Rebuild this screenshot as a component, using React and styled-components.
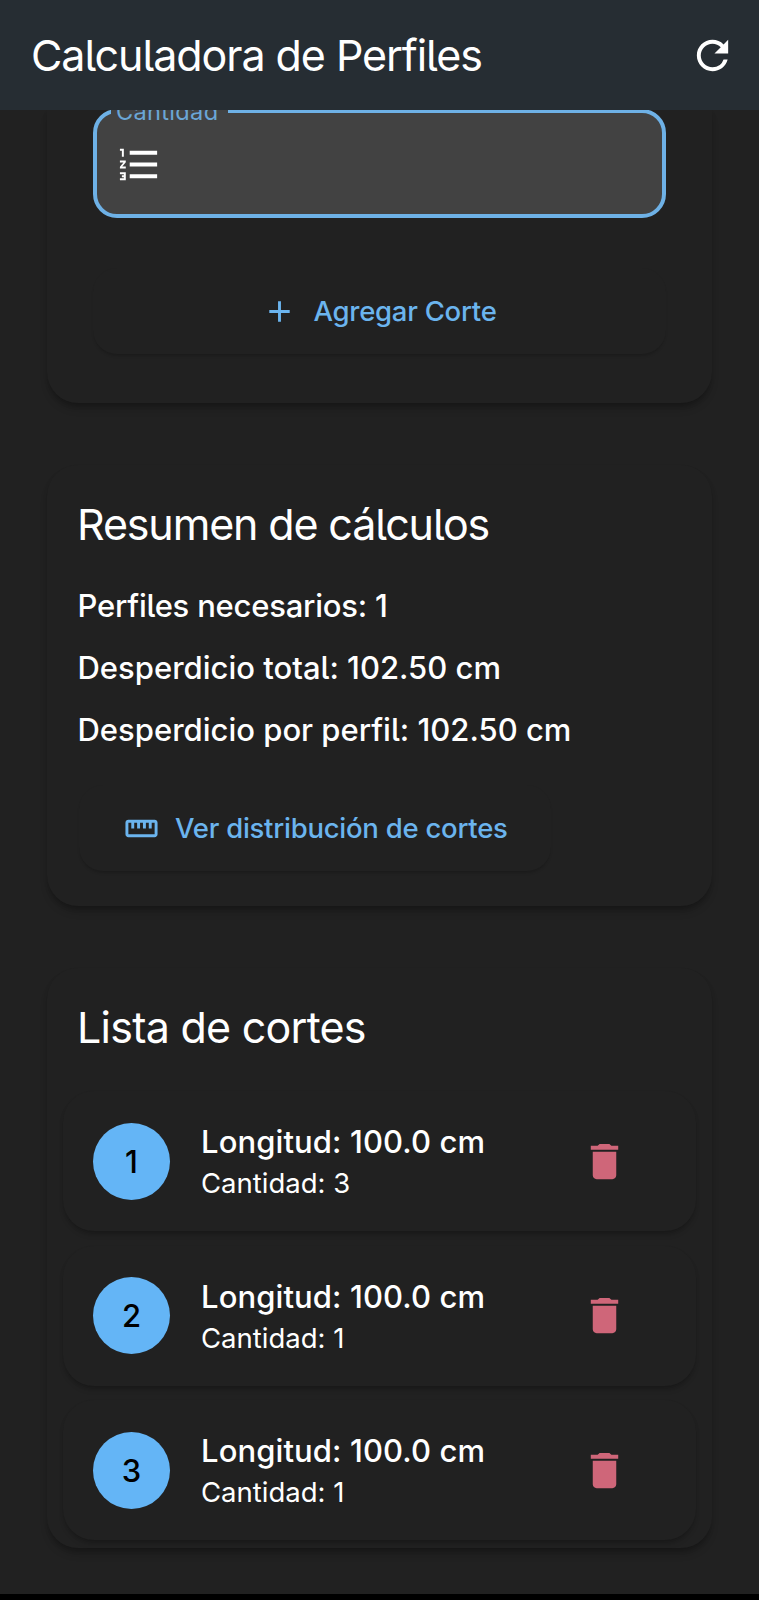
import React from 'react';
import styled, { createGlobalStyle } from 'styled-components';
import { MdAdd, MdDelete, MdFormatListNumbered, MdRefresh, MdStraighten } from 'react-icons/md';

const accent = '#64b5f6';

const GlobalStyle = createGlobalStyle`
  *, *::before, *::after { box-sizing: border-box; }
  body {
    margin: 0;
    background: #212121;
    color: #fff;
    font-family: Inter, "Liberation Sans", sans-serif;
    font-feature-settings: "cv05" 1;
  }
  button {
    border: 0;
    font: inherit;
    font-feature-settings: inherit;
    background: none;
    padding: 0;
  }
`;

const Screen = styled.div`
  display: flex;
  flex-direction: column;
  width: 759px;
  height: 1600px;
  overflow: hidden;
`;

const AppBar = styled.header`
  display: flex;
  flex: none;
  align-items: center;
  justify-content: space-between;
  height: 110px;
  padding: 1px 23px 0 31px;
  background: #262d33;
  position: relative;
  z-index: 1;
`;

const AppTitle = styled.h1`
  margin: 0;
  font-size: 43px;
  font-weight: 400;
  line-height: 55px;
  letter-spacing: -1.06px;
`;

const IconButton = styled.button`
  display: flex;
  color: ${(p) => p.$color || '#fff'};
`;

const Content = styled.main`
  flex: 1;
  min-height: 0;
  display: flex;
  flex-direction: column;
  gap: 62px;
  padding: 0 47px;
`;

const Card = styled.section`
  flex: none;
  height: ${(p) => p.$height}px;
  padding: ${(p) => p.$padding};
  border-radius: ${(p) => (p.$clipped ? '0 0 31px 31px' : '31px')};
  background: #212121;
  box-shadow: 0 7px 8px -2px rgba(0, 0, 0, 0.22), 0 3px 5px -1px rgba(0, 0, 0, 0.16);
`;

const Field = styled.div`
  position: relative;
  display: flex;
  align-items: center;
  height: 109px;
  margin-top: -1px;
  padding: 1px 0 0 19px;
  border: 4px solid #6eb1e6;
  border-radius: 24px;
  background: #424242;
`;

const FieldLabel = styled.label`
  position: absolute;
  top: -16px;
  left: 14px;
  width: 117px;
  padding-left: 5px;
  background: #424242;
  color: #6ba6d6;
  font-size: 23.6px;
  line-height: 30px;
  letter-spacing: 0.3px;
`;

const ActionButton = styled.button`
  display: flex;
  align-items: center;
  justify-content: ${(p) => (p.$wide ? 'center' : 'flex-start')};
  gap: 16px;
  width: ${(p) => (p.$wide ? '573px' : '472px')};
  height: 86px;
  margin-top: ${(p) => (p.$wide ? '50px' : '32px')};
  padding-left: ${(p) => (p.$wide ? '0' : '45px')};
  border-radius: 24px;
  background: #212121;
  box-shadow: 0 3px 3px -1px rgba(0, 0, 0, 0.18);
  color: #6bb4ee;
  font-size: 27.5px;
  font-weight: 500;
  letter-spacing: -0.25px;
`;

const CardTitle = styled.h2`
  margin: 0 0 ${(p) => p.$gap}px -2px;
  font-size: 43px;
  font-weight: 400;
  line-height: 55px;
  letter-spacing: ${(p) => p.$tracking}px;
`;

const Stat = styled.p`
  margin: 0 0 15px -1.5px;
  font-size: 31px;
  font-weight: 500;
  line-height: 47px;
  letter-spacing: ${(p) => p.$tracking}px;
`;

const CutItem = styled.li`
  display: flex;
  align-items: center;
  height: 140px;
  padding: 0 68px 0 30px;
  border-radius: 31px;
  background: #212121;
  box-shadow: 0 5px 6px -2px rgba(0, 0, 0, 0.2), 0 2px 4px -1px rgba(0, 0, 0, 0.14);
`;

const CutList = styled.ul`
  display: flex;
  flex-direction: column;
  gap: 14.7px;
  margin: 0 -16px;
  padding: 0;
  list-style: none;
`;

const Badge = styled.span`
  display: flex;
  align-items: center;
  justify-content: center;
  width: 77px;
  height: 77px;
  margin-right: 31px;
  border-radius: 50%;
  background: ${accent};
  color: #000;
  font-size: 31px;
  font-weight: 500;
`;

const CutText = styled.div`
  flex: 1;
`;

const CutLength = styled.div`
  font-size: 31px;
  font-weight: 500;
  line-height: 46px;
  letter-spacing: 0.1px;
`;

const CutAmount = styled.div`
  font-size: 27.5px;
  line-height: 36px;
  padding-bottom: 2px;
`;

const NavigationStrip = styled.div`
  flex: none;
  height: 6px;
  background: #000;
`;

const stats = [
  { text: 'Perfiles necesarios: 1', tracking: -0.22 },
  { text: 'Desperdicio total: 102.50 cm', tracking: 0 },
  { text: 'Desperdicio por perfil: 102.50 cm', tracking: 0 },
];

const cuts = [
  { length: '100.0', amount: 3 },
  { length: '100.0', amount: 1 },
  { length: '100.0', amount: 1 },
];

export default function App() {
  return (
    <>
      <GlobalStyle />
      <Screen>
        <AppBar>
          <AppTitle>Calculadora de Perfiles</AppTitle>
          <IconButton aria-label="Reiniciar"><MdRefresh size={47} /></IconButton>
        </AppBar>
        <Content>
          <Card $clipped $height={293} $padding="0 46px">
            <Field>
              <FieldLabel>Cantidad</FieldLabel>
              <MdFormatListNumbered size={47} />
            </Field>
            <ActionButton $wide>
              <MdAdd size={35} />
              Agregar Corte
            </ActionButton>
          </Card>
          <Card $height={441} $padding="32px 32px 0">
            <CardTitle $gap={30} $tracking={-1.15}>Resumen de cálculos</CardTitle>
            {stats.map((s) => <Stat key={s.text} $tracking={s.tracking}>{s.text}</Stat>)}
            <ActionButton>
              <MdStraighten size={35} />
              Ver distribución de cortes
            </ActionButton>
          </Card>
          <Card $height={580} $padding="32px 32px 0">
            <CardTitle $gap={36} $tracking={-0.75}>Lista de cortes</CardTitle>
            <CutList>
              {cuts.map((c, i) => (
                <CutItem key={i}>
                  <Badge>{i + 1}</Badge>
                  <CutText>
                    <CutLength>Longitud: {c.length} cm</CutLength>
                    <CutAmount>Cantidad: {c.amount}</CutAmount>
                  </CutText>
                  <IconButton $color="#cf6679" aria-label="Eliminar"><MdDelete size={47} /></IconButton>
                </CutItem>
              ))}
            </CutList>
          </Card>
        </Content>
        <NavigationStrip />
      </Screen>
    </>
  );
}
